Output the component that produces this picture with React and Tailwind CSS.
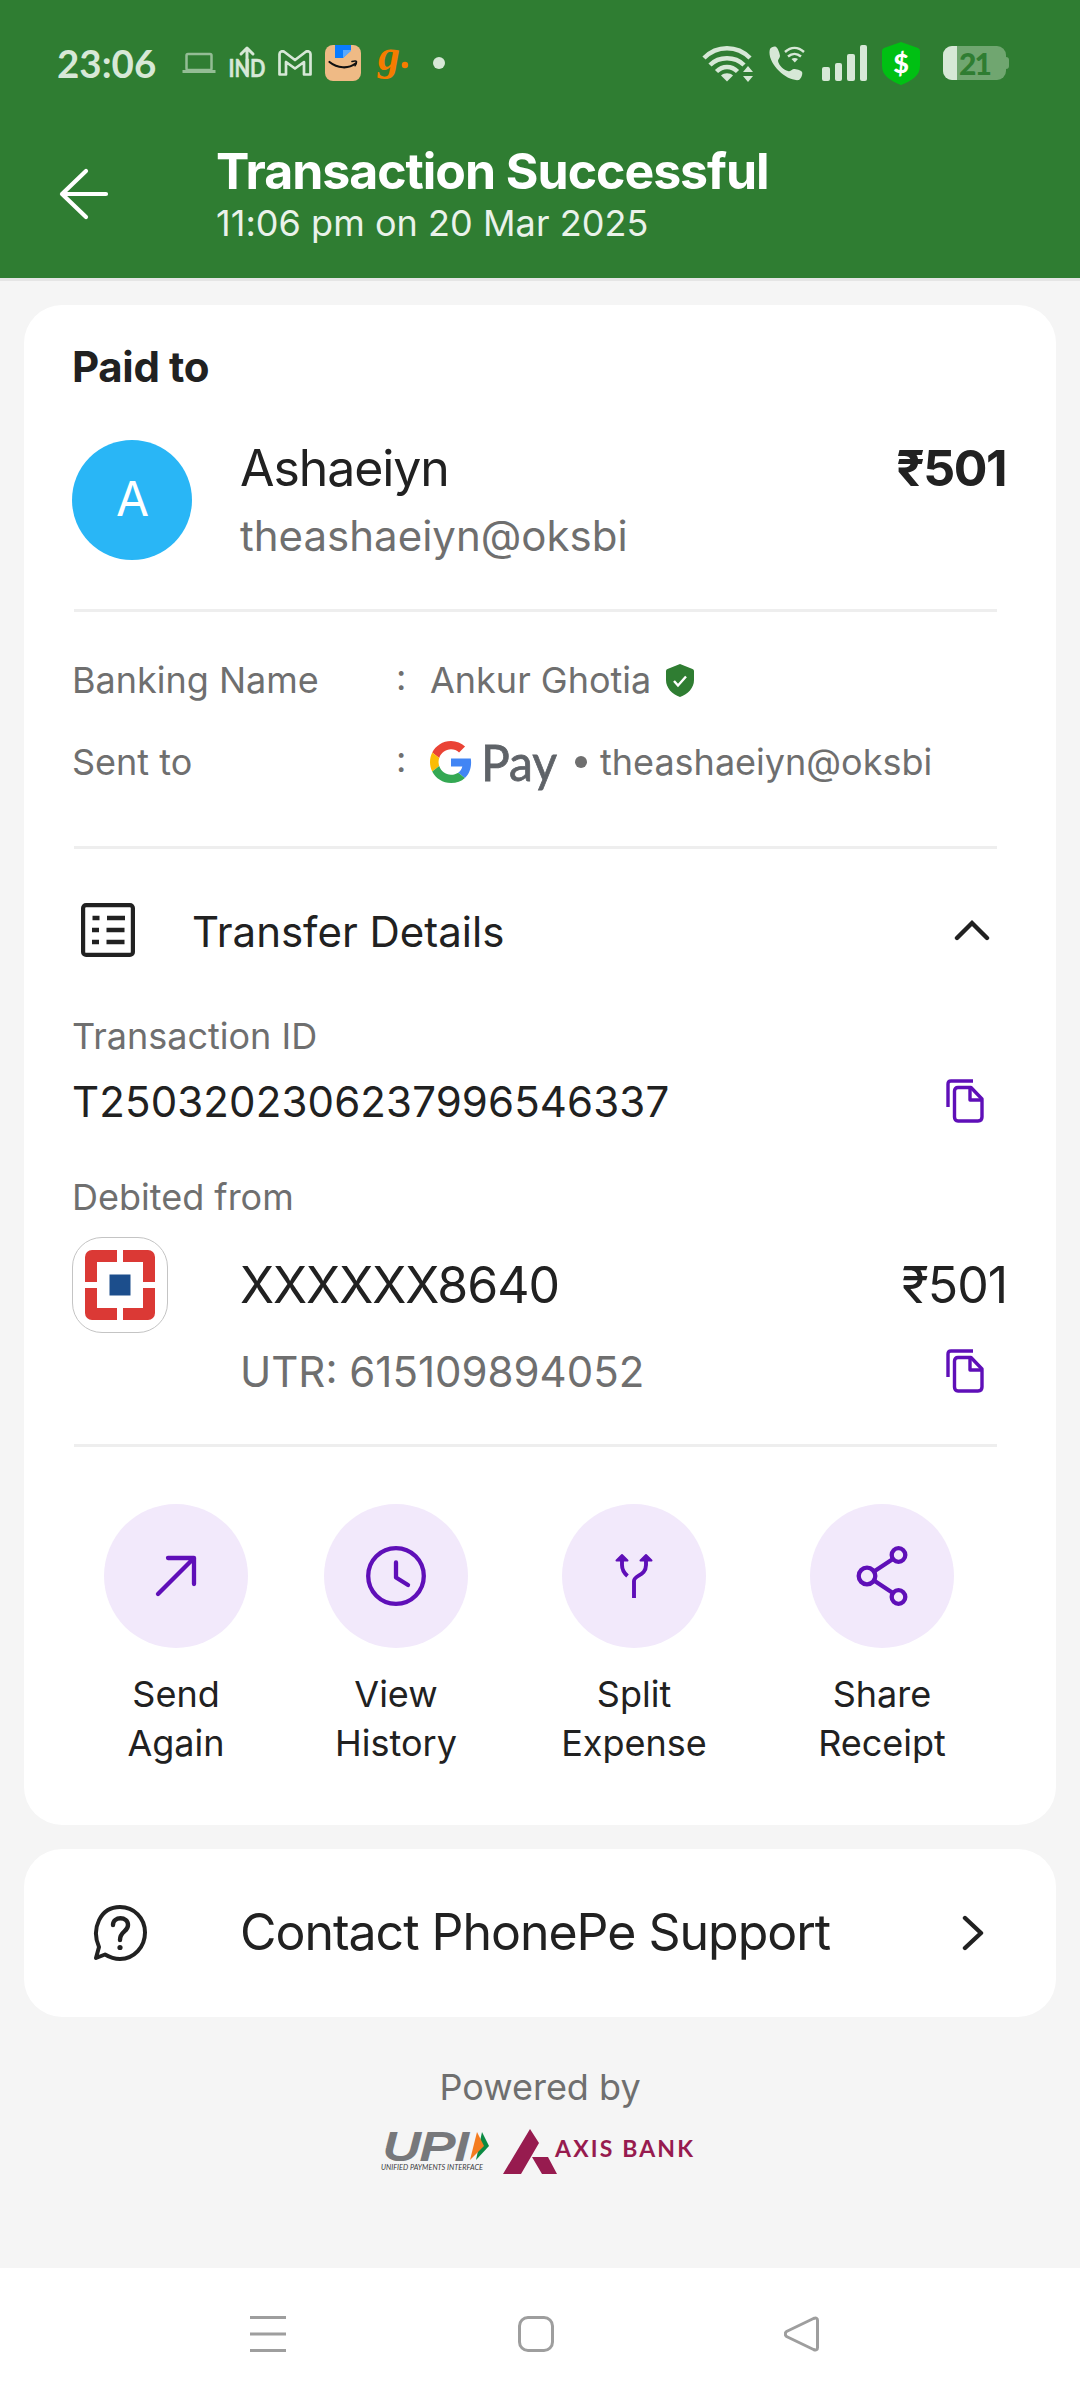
import React from 'react';

const INK = '#212121';
const PURPLE = '#5f0fb8';

// Icons shown on the left and right of the status bar
const StatusBar = () => (
  <div className="flex h-[126px] items-center pl-[57px] pr-[71px] text-[#d7e8d7]">
    <span className="w-[125px] font-['Lato','Inter',sans-serif] text-[38.5px] font-bold leading-12">23:06</span>
    <svg width="34" height="22" viewBox="0 0 34 22" className="mr-[13px] opacity-60" fill="none" stroke="currentColor" strokeWidth="2.5">
      <rect x="4.5" y="2" width="25" height="16" rx="1.5" />
      <path d="M0.5 19.5h33" strokeWidth="3" />
    </svg>
    <svg width="38" height="36" viewBox="0 0 38 36" className="mr-[11px] overflow-visible" fill="none" stroke="currentColor" strokeWidth="3" strokeLinecap="round" strokeLinejoin="round">
      <text x="-0.5" y="32" fontFamily="Lato, sans-serif" fontWeight="700" fontSize="25" fill="currentColor" strokeWidth="0.500" textLength="37" lengthAdjust="spacingAndGlyphs">IND</text>
      <path d="M18 30V4M12 9l6-6 6 6" />
    </svg>
    <svg width="34" height="26" viewBox="0 0 34 26" className="mr-[13px]" fill="none" stroke="currentColor" strokeWidth="2.700" strokeLinejoin="round">
      <path d="M1.5 4c0-2.500 3-3.500 5-2L17 10 27.500 2c2-1.500 5-.5 5 2v20.500h-6.500V12L17 18.500 8 12v12.500H1.500z" />
    </svg>
    <svg width="36" height="36" viewBox="0 0 36 36" className="mr-[17px]">
      <rect width="36" height="36" rx="8" fill="#efba85" />
      <path d="M10 0h16v5l-8 8h-8z" fill="#0a7cff" />
      <path d="M26 5v1l-8 7V5z" fill="#5aa9ff" />
      <path d="M4.500 17c8 6.500 19 7 26 1.500" fill="none" stroke="#111" strokeWidth="2.200" strokeLinecap="round" />
      <path d="M27 16.500c3-.8 4.500-.5 4.500.2s-.5 2.800-1.500 4" fill="none" stroke="#111" strokeWidth="1.600" strokeLinecap="round" />
    </svg>
    <svg width="34" height="38" viewBox="0 0 34 38" className="overflow-visible">
      <text x="0" y="25.500" fontFamily="Liberation Serif, serif" fontWeight="700" fontStyle="italic" fontSize="44" fill="#f57c00">g</text>
      <circle cx="27" cy="21" r="3.200" fill="#f57c00" />
    </svg>
    <span className="ml-[21px] size-3 rounded-full bg-[#d7e8d7]" />

    <svg width="52" height="38" viewBox="0 0 52 38" className="ml-auto mr-[15px]" fill="none" stroke="currentColor" strokeWidth="4.500">
      <path d="M2 14C15 1 35 1 48 14" />
      <path d="M8 21c9-9 25-9 34 0" />
      <path d="M14.500 27.500c6-6 15-6 21 0" />
      <path d="M19 31.500c3-3 9-3 12 0l-6 6z" fill="currentColor" stroke="none" />
      <path d="M46 22l5 6H41zM46 38l5-6H41z" fill="currentColor" stroke="none" />
    </svg>
    <svg width="36" height="36" viewBox="0 0 36 36" className="mr-[17px]">
      <path d="M1 4c1-2 5-3 6-2 2 1 4 7 4 9s-2 3-2 5c1 5 6 9 10 10 3 1 4-2 6-2s7 1 8 3-1 7-3 8C17 37-3 17 1 4z" fill="currentColor" />
      <path d="M16 7c6-5.500 13-5.500 19 0M19 11.500c4-3.500 9-3.500 13 0" fill="none" stroke="currentColor" strokeWidth="2.400" />
      <path d="M22.500 14c2-1.500 4.500-1.500 6.500 0l-3.200 3.500z" fill="currentColor" />
    </svg>
    <div className="mr-[15px] flex h-9 items-end gap-[5px]">
      <span className="h-3.5 w-[7.500px] rounded-xs bg-current" />
      <span className="h-[18px] w-[7.500px] rounded-xs bg-current" />
      <span className="h-[27px] w-[7.500px] rounded-xs bg-current" />
      <span className="h-9 w-[7.500px] rounded-xs bg-current" />
    </div>
    <svg width="38" height="43" viewBox="0 0 38 43" className="mr-[23px]">
      <path d="M19 0l17 6q2 1 2 3v15c0 10-9 15-19 19C9 39 0 34 0 24V9q0-2 2-3z" fill="#00c013" />
      <text x="19" y="31" textAnchor="middle" fontFamily="Lato, sans-serif" fontWeight="900" fontSize="27" fill="#fff">$</text>
    </svg>
    <div className="flex items-center">
      <div className="flex h-[34px] w-[63px] items-center overflow-hidden rounded-[9px] bg-[#70a670]">
        <span className="h-full w-3.5 bg-[#d7e8d7]" />
        <span className="ml-[2px] font-['Lato','Inter',sans-serif] text-[30px] font-black leading-[34px] tracking-[-2px] text-[#2f7d32]">21</span>
      </div>
      <span className="h-3 w-[3px] rounded-r-sm bg-[#70a670]" />
    </div>
  </div>
);

const Header = () => (
  <header className="flex h-[152px] pl-[59px] text-white">
    <svg width="50" height="52" viewBox="0 0 50 52" className="mt-[42px]" fill="none" stroke="currentColor" strokeWidth="4.200" strokeLinecap="round" strokeLinejoin="round">
      <path d="M47 26H3M27 3L3 26l24 23" />
    </svg>
    <div className="ml-[107px] mt-[19px]">
      <h1 className="text-[50px] font-bold leading-[52px] tracking-[-1.04px]">Transaction Successful</h1>
      <p className="text-[36px] leading-[52px] tracking-[0.050px] text-[#eaf2ea]">11:06 pm on 20 Mar 2025</p>
    </div>
  </header>
);

const Divider = ({ className }) => (
  <div className={`ml-0.5 h-[3px] w-[923px] bg-[#eeeeee] ${className}`} />
);

const CopyIcon = () => (
  <svg width="38" height="44" viewBox="0 0 38 44" className="mr-6" fill="none" stroke={PURPLE} strokeWidth="3.400" strokeLinejoin="round">
    <path d="M27 2H5Q2 2 2 5v23" />
    <path d="M12 8.500h13L36 20v18q0 4-4 4H12q-3.500 0-3.500-4V12q0-3.500 3.500-3.500z" />
    <path d="M24 8.500V21h12" />
  </svg>
);

const ShieldCheck = () => (
  <svg width="28" height="33" viewBox="0 0 28 33" className="ml-[15px]">
    <path d="M14 0l12.500 5Q28 5.500 28 7v9c0 8-6 14-14 17C6 30 0 24 0 16V7q0-1.500 1.500-2z" fill="#2f7d32" />
    <path d="M8 17l4 4.500 8-9" fill="none" stroke="#fff" strokeWidth="2.400" />
  </svg>
);

const GPayLogo = () => (
  <>
    <svg width="42" height="42" viewBox="0 0 48 48">
      <path fill="#ea4335" d="M24 9.500c3.540 0 6.710 1.220 9.210 3.600l6.850-6.850C35.900 2.380 30.470 0 24 0 14.620 0 6.510 5.380 2.560 13.220l7.980 6.190C12.430 13.720 17.740 9.500 24 9.500z" />
      <path fill="#4285f4" d="M46.980 24.550c0-1.570-.15-3.090-.38-4.550H24v9.020h12.940c-.58 2.960-2.260 5.480-4.780 7.180l7.730 6c4.510-4.180 7.090-10.360 7.090-17.650z" />
      <path fill="#fbbc05" d="M10.530 28.590c-.48-1.450-.76-2.990-.76-4.590s.27-3.140.76-4.590l-7.980-6.190C.92 16.460 0 20.120 0 24c0 3.880.92 7.540 2.560 10.780l7.970-6.190z" />
      <path fill="#34a853" d="M24 48c6.480 0 11.930-2.130 15.890-5.810l-7.730-6c-2.150 1.450-4.920 2.300-8.160 2.300-6.260 0-11.570-4.220-13.470-9.910l-7.980 6.190C6.510 42.620 14.620 48 24 48z" />
    </svg>
    <svg width="76" height="60" viewBox="0 0 76 60" className="ml-2.5 overflow-visible">
      <text x="-1" y="48.500" fontFamily="Lato, sans-serif" fontSize="51" fill="#5f6368" stroke="#5f6368" strokeWidth="0.800" textLength="76" lengthAdjust="spacingAndGlyphs">Pay</text>
    </svg>
  </>
);

const BankLogo = () => (
  <div className="flex size-24 items-center justify-center rounded-[30px] border border-[#c4c4c4]">
    <svg width="70" height="70" viewBox="0 0 70 70">
      <rect width="70" height="70" rx="7" fill="#db3935" />
      <rect x="12" y="12" width="46" height="46" fill="#fff" />
      <path d="M32 0h6v70h-6zM0 32h70v6H0z" fill="#fff" />
      <rect x="24.500" y="24.500" width="21" height="21" fill="#1c4e8c" />
    </svg>
  </div>
);

const ActionIcon = ({ children }) => (
  <svg width="72" height="72" viewBox="0 0 72 72" fill="none" stroke={PURPLE} strokeWidth="4.300" strokeLinecap="round" strokeLinejoin="round">
    {children}
  </svg>
);

const actions = [
  {
    lines: ['Send', 'Again'],
    margin: 'ml-8',
    icon: <path d="M18 54L54 18M28 18h26v26" />,
  },
  {
    lines: ['View', 'History'],
    margin: 'ml-[76px]',
    icon: (
      <>
        <circle cx="36" cy="36" r="27.800" />
        <path d="M36 22.500v15l12 7.500" />
      </>
    ),
  },
  {
    lines: ['Split', 'Expense'],
    margin: 'ml-[94px]',
    icon: (
      <>
        <path d="M36 58V41c0-6 12-5 12-16v-4M24 21v4c0 5 2 8 5.500 11" strokeWidth="3.900" strokeLinecap="butt" />
        <path d="M18.500 20.500l5.500-5.500 5.500 5.500zM42.500 20.500l5.500-5.500 5.500 5.500z" fill={PURPLE} strokeWidth="2" />
      </>
    ),
  },
  {
    lines: ['Share', 'Receipt'],
    margin: 'ml-[104px]',
    icon: (
      <>
        <circle cx="21" cy="36" r="8.300" />
        <circle cx="52.500" cy="15" r="6.800" />
        <circle cx="52.500" cy="57" r="6.800" />
        <path d="M28 31.500l18.500-12.300M28 40.500l18.500 12.300" />
      </>
    ),
  },
];

const PaymentCard = () => (
  <section className="mx-6 mt-6 rounded-[38px] bg-white px-12 pb-[57px] pt-[38px]">
    <h2 className="text-[42px] font-bold leading-12 tracking-[-0.350px]">Paid to</h2>

    <div className="mt-[49px] flex h-[120px]">
      <div className="flex size-[120px] items-center justify-center rounded-full bg-[#29b6f6] pb-0.5 text-[48px] tracking-[-1px] text-white">A</div>
      <div className="ml-12 flex-1">
        <div className="flex justify-between text-[50px] leading-14 tracking-[-1.100px]">
          <span>Ashaeiyn</span>
          <span className="mr-0.5 font-bold tracking-[-1.500px]">₹501</span>
        </div>
        <p className="mt-3 text-[42px] leading-14 text-[#6f6f6f]">theashaeiyn@oksbi</p>
      </div>
    </div>

    <Divider className="mt-[49px]" />

    <div className="mt-12 flex h-10 items-center text-[36px] text-[#6f6f6f]">
      <span className="w-[324px]">Banking Name</span>
      <span className="w-[34px] pb-1.5">:</span>
      <span>Ankur Ghotia</span>
      <ShieldCheck />
    </div>
    <div className="mt-[42px] flex h-10 items-center text-[36px] text-[#6f6f6f]">
      <span className="w-[324px]">Sent to</span>
      <span className="w-[34px] pb-1.5">:</span>
      <GPayLogo />
      <span className="ml-[17px] size-3 rounded-full bg-[#6f6f6f]" />
      <span className="ml-[13px]">theashaeiyn@oksbi</span>
    </div>

    <Divider className="mt-16" />

    <div className="mt-[54px] flex h-[54px] items-center">
      <svg width="54" height="54" viewBox="0 0 54 54" className="ml-[9px]" fill="none" stroke={INK} strokeWidth="4.200">
        <rect x="2.100" y="2.100" width="49.800" height="49.800" rx="3" />
        <path d="M11.500 15h7M26 15h18M11 27h7M25.500 27h18M11 39h7M25.500 39h18" strokeWidth="4.600" />
      </svg>
      <span className="ml-[57px] pt-[3px] text-[42px]">Transfer Details</span>
      <svg width="36" height="22" viewBox="0 0 36 22" className="ml-auto mr-[18px]" fill="none" stroke={INK} strokeWidth="4.400" strokeLinecap="round">
        <path d="M3 19L18 4l15 15" />
      </svg>
    </div>

    <p className="mt-[59px] text-[36px] leading-10 text-[#6f6f6f]">Transaction ID</p>
    <div className="mt-5 flex h-[50px] items-center justify-between text-[42px]">
      <span className="tracking-[0.130px]">T2503202306237996546337</span>
      <CopyIcon />
    </div>

    <p className="mt-[51px] text-[36px] leading-10 text-[#6f6f6f]">Debited from</p>
    <div className="mt-5 flex h-24 items-center text-[50px] tracking-[-1.050px]">
      <BankLogo />
      <span className="ml-[72px] flex-1">XXXXXX8640</span>
      <span className="mr-px">₹501</span>
    </div>
    <div className="mt-[13px] flex h-[50px] items-center justify-between pl-[168px] text-[42px] text-[#6f6f6f]">
      <span>UTR: 615109894052</span>
      <CopyIcon />
    </div>

    <Divider className="mt-12" />

    <div className="mt-[57px] flex">
      {actions.map((action) => (
        <button key={action.lines[1]} className={`flex w-36 flex-col items-center ${action.margin}`}>
          <span className="flex size-36 items-center justify-center rounded-full bg-[#f2e9fb]">
            <ActionIcon>{action.icon}</ActionIcon>
          </span>
          <span className="mt-[22px] whitespace-nowrap text-center text-[36px] leading-[49px]">
            {action.lines[0]}
            <br />
            {action.lines[1]}
          </span>
        </button>
      ))}
    </div>
  </section>
);

const SupportCard = () => (
  <section className="mx-6 mt-6 flex h-[168px] items-center rounded-[38px] bg-white pl-[69px] pr-[71px]">
    <svg width="54" height="56" viewBox="0 0 54 56" fill="none" stroke={INK} strokeWidth="4" strokeLinecap="round" strokeLinejoin="round">
      <path d="M3 53l3-11C-2 24 7 2 27 2c14 0 25 11 25 25.500S41 54 27 54c-6 0-10-1.500-15-4.500z" />
      <path d="M20 20c0-9 15-9 15 0 0 7-8 6-8 15" strokeWidth="4.400" />
      <circle cx="27" cy="42.500" r="2.600" fill={INK} stroke="none" />
    </svg>
    <span className="ml-[93px] flex-1 pb-0.5 text-[50px] leading-14 tracking-[-1.020px]">Contact PhonePe Support</span>
    <svg width="24" height="36" viewBox="0 0 24 36" fill="none" stroke={INK} strokeWidth="4.400" strokeLinecap="round" strokeLinejoin="round">
      <path d="M4 3l16 15L4 33" />
    </svg>
  </section>
);

const PoweredBy = () => (
  <footer className="mt-[50px] flex flex-col items-center">
    <p className="text-[36px] leading-10 text-[#6f6f6f]">Powered by</p>
    <div className="mt-[22px] flex pr-1">
      <svg width="112" height="48" viewBox="0 0 112 48" className="overflow-visible">
        <text x="2" y="30.500" fontFamily="Liberation Sans, sans-serif" fontStyle="italic" fontSize="39" fill="#77787b" stroke="#77787b" strokeWidth="2" textLength="86" lengthAdjust="spacingAndGlyphs">UPI</text>
        <path d="M101 3l7 14-13 14z" fill="#0b8a43" />
        <path d="M96 3l7 14-14 14z" fill="#f47c20" />
        <text x="0" y="41" fontFamily="Lato, sans-serif" fontStyle="italic" fontSize="7.500" fill="#3a3a3c" textLength="102" lengthAdjust="spacingAndGlyphs">UNIFIED PAYMENTS INTERFACE</text>
      </svg>
      <svg width="192" height="48" viewBox="0 0 192 48" className="ml-2.5 overflow-visible">
        <path d="M27 0l9 14-18 31H0zM29 28h16l9 17H39z" fill="#971b4f" />
        <text x="52" y="28" fontFamily="Lato, sans-serif" fontWeight="700" fontSize="23" fill="#971b4f" textLength="138">AXIS BANK</text>
      </svg>
    </div>
  </footer>
);

const NavBar = () => (
  <nav className="flex h-[132px] items-center bg-white pl-[250px]">
    <svg width="36" height="36" viewBox="0 0 36 36" fill="none" stroke="#9e9e9e" strokeWidth="3">
      <path d="M0 1.500h36M0 18h36M0 34.500h36" />
    </svg>
    <span className="ml-[232px] size-9 rounded-[10px] border-[3px] border-[#9e9e9e]" />
    <svg width="36" height="36" viewBox="0 0 36 36" className="ml-[230px]" fill="none" stroke="#9e9e9e" strokeWidth="3" strokeLinejoin="round">
      <path d="M2.500 15.500L29.500 2.500Q33.500 1 33.500 4.500v27Q33.500 35 29.500 33.500L2.500 20.500Q0 18 2.500 15.500z" />
    </svg>
  </nav>
);

export default function App() {
  return (
    <div className="flex h-[2400px] w-[1080px] flex-col overflow-hidden bg-[#f5f5f5] font-['Inter',sans-serif] text-[#212121]">
      <div className="bg-[#2f7d32]">
        <StatusBar />
        <Header />
      </div>
      <main className="flex-1 border-t-[3px] border-[#e5e5e5]">
        <PaymentCard />
        <SupportCard />
        <PoweredBy />
      </main>
      <NavBar />
    </div>
  );
}
